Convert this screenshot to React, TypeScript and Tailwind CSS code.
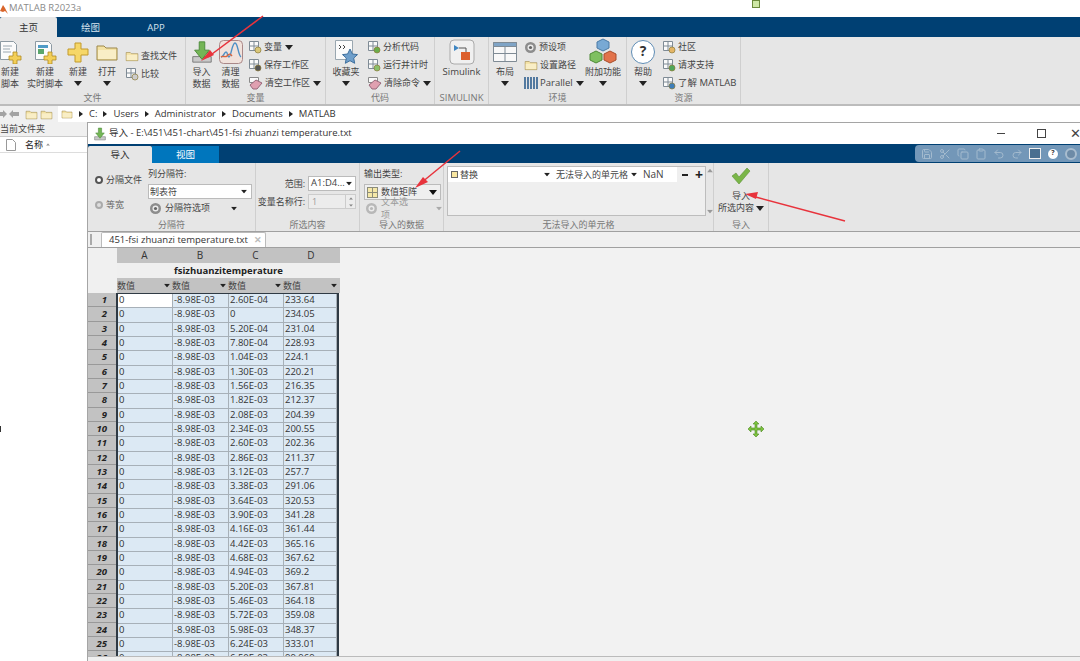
import { Clipboard, Copy, Redo2, Save, Scissors, Undo2 } from "lucide-react";

const font = "font-['Open_Sans','Noto_Sans_CJK_SC',sans-serif]";

const Caret = ({ className = "" }: { className?: string }) => (
  <svg width="8" height="5" viewBox="0 0 8 5" className={`shrink-0 ${className}`}>
    <path d="M0 0h8L4 5z" fill="currentColor" />
  </svg>
);

const Doc = ({ live = false }: { live?: boolean }) => (
  <svg width="24" height="24" viewBox="0 0 24 24">
    <path d="M2.5 1.5h13l3 3v15h-16z" fill="#fbfbfb" stroke="#8d9aa3" />
    {live ? (
      <g>
        <path d="M5 5h10v3H5z" fill="#4f9bc7" />
        <path d="M5 9h6v5H5z" fill="#5aa66b" />
      </g>
    ) : (
      <path d="M5 6h9M5 9h7M5 12h8" stroke="#9aa7b0" />
    )}
    <path d="M15 12h4v4h4v4h-4v4h-4v-4h-4v-4h4z" fill="#f3cf58" stroke="#b08a22" strokeWidth=".8" />
  </svg>
);

const PlusIcon = () => (
  <svg width="24" height="24" viewBox="0 0 24 24">
    <path d="M9 3h6v6h7v6h-7v7H9v-7H2V9h7z" fill="#f6d768" stroke="#c29a2c" />
  </svg>
);

const FolderIcon = ({ size = 24 }: { size?: number }) => (
  <svg width={size} height={size} viewBox="0 0 24 24" className="shrink-0">
    <path d="M2 6h7l2 2h11v12H2z" fill="#f4e2a4" stroke="#9c8748" />
    <path d="M3 10h18v9H3z" fill="#f9eec6" />
  </svg>
);

const ImportIcon = ({ size = 24 }: { size?: number }) => (
  <svg width={size} height={size} viewBox="0 0 26 26" className="shrink-0">
    <path d="M3 18h20v6H3z" fill="#c9c9c9" stroke="#777" />
    <path d="M10 2h6v9h5l-8 10-8-10h5z" fill="#74b556" stroke="#4b8a38" />
  </svg>
);

const CleanIcon = () => (
  <svg width="26" height="26" viewBox="0 0 26 26">
    <rect x="1.5" y="1.5" width="23" height="23" rx="4" fill="#f1e2dc" stroke="#a88" />
    <path d="M3 18c3 0 3-5 5-5s1 5 3 5 3-14 6-14 3 12 6 14" fill="none" stroke="#4c90c6" strokeWidth="1.4" />
    <path d="M3 18c2-2 4 1 6-1s3-3 5 0" fill="none" stroke="#d8653f" strokeWidth="1.4" />
  </svg>
);

const Star = () => (
  <svg width="26" height="26" viewBox="0 0 26 26">
    <path d="M2.5 1.5h17v19h-17z" fill="#fbfbfb" stroke="#9aa7b0" />
    <path d="M6 6l2 2-2 2M10 6l2 2-2 2" fill="none" stroke="#444" />
    <path d="M17 10l2.4 5 5.1.6-3.8 3.5 1 5.2-4.7-2.6-4.7 2.6 1-5.2-3.8-3.5 5.1-.6z" fill="#6f9fcb" stroke="#3f709e" />
  </svg>
);

const SimulinkIcon = () => (
  <svg width="26" height="26" viewBox="0 0 26 26">
    <rect x="1" y="1" width="24" height="24" rx="4" fill="#f0f0f0" stroke="#aaa" />
    <path d="M5 6l5 3-5 3z" fill="#3f86c2" />
    <path d="M10 9h7v4" fill="none" stroke="#555" />
    <path d="M12 13h9v8h-9z" fill="#dc5f2c" />
  </svg>
);

const LayoutIcon = () => (
  <svg width="26" height="26" viewBox="0 0 26 26">
    <path d="M1.5 3.5h23v19h-23z" fill="#f8f8f8" stroke="#7f8b95" />
    <path d="M1.5 3.5h23v4h-23z" fill="#7fa4c6" stroke="#7f8b95" />
    <path d="M13 7.5v15M1.5 14.5h23" stroke="#7f8b95" />
  </svg>
);

const AddonIcon = () => (
  <svg width="30" height="28" viewBox="0 0 30 28">
    <path d="M15 1l6 3v6l-6 3-6-3V4z" fill="#78a9d4" stroke="#4a7ba6" />
    <path d="M8 13l6 3v6l-6 3-6-3v-6z" fill="#7fc060" stroke="#4e8a36" />
    <path d="M22 13l6 3v6l-6 3-6-3v-6z" fill="#e2734b" stroke="#a94e2c" />
  </svg>
);

const HelpIcon = ({ size = 24 }: { size?: number }) => (
  <div
    className="flex items-center justify-center rounded-full border border-[#5f8db5] bg-white font-bold text-[#333]"
    style={{ width: size, height: size, fontSize: size * 0.58 }}
  >
    ?
  </div>
);

const Small = ({ color = "#d9c77a" }: { color?: string }) => (
  <svg width="14" height="14" viewBox="0 0 14 14" className="shrink-0">
    <path d="M1.5 1.5h9v9h-9z" fill="#fafafa" stroke="#7f8b95" />
    <path d="M1.5 6h9M6 1.5v9" stroke="#7f8b95" />
    <circle cx="10" cy="10" r="3" fill={color} stroke="#8b7a38" strokeWidth=".7" />
  </svg>
);

const Eraser = () => (
  <svg width="15" height="14" viewBox="0 0 15 14" className="shrink-0">
    <path d="M1.5 1.5h9v5h-9z" fill="#fafafa" stroke="#8a8a8a" />
    <path d="M2 9l6-5 6 3-5 6H5z" fill="#e0a0b0" stroke="#98687a" />
  </svg>
);

const Gear = ({ dim = false }: { dim?: boolean }) => (
  <svg width="13" height="13" viewBox="0 0 13 13" className="shrink-0">
    <circle cx="6.5" cy="6.5" r="5.5" fill={dim ? "#b8b8b8" : "#8d8d8d"} />
    <circle cx="6.5" cy="6.5" r="3" fill="#ececec" />
    <circle cx="6.5" cy="6.5" r="1.6" fill={dim ? "#b8b8b8" : "#666"} />
  </svg>
);

const BigButton = ({
  w,
  icon,
  lines,
  caret = false,
  size = "text-[9px]",
}: {
  w: number;
  icon: React.ReactNode;
  lines: string[];
  caret?: boolean;
  size?: string;
}) => (
  <div className="flex shrink-0 flex-col items-center" style={{ width: w }}>
    <div className="flex h-[29px] items-center justify-center">{icon}</div>
    {lines.map((l) => (
      <div key={l} className={`h-[12px] leading-[12px] whitespace-nowrap ${size}`}>
        {l}
      </div>
    ))}
    {caret && <Caret className="mt-[3px] text-[#222]" />}
  </div>
);

const SmallRow = ({
  icon,
  text,
  caret = false,
  size = "text-[9px]",
}: {
  icon: React.ReactNode;
  text: string;
  caret?: boolean;
  size?: string;
}) => (
  <div className={`flex h-[18px] items-center gap-[2px] whitespace-nowrap ${size}`}>
    {icon}
    <span>{text}</span>
    {caret && <Caret className="ml-[1px] text-[#222]" />}
  </div>
);

const Group = ({
  w,
  label,
  children,
  className = "",
  body = "h-[56px]",
  labelSize = "text-[9px]",
}: {
  w: number;
  label: string;
  children: React.ReactNode;
  className?: string;
  body?: string;
  labelSize?: string;
}) => (
  <div className="flex h-full shrink-0 flex-col border-r border-[#cfcfcf]" style={{ width: w }}>
    <div className={`flex overflow-hidden ${body} ${className}`}>{children}</div>
    <div className={`h-[12px] text-center leading-[12px] whitespace-nowrap text-[#777] ${labelSize}`}>{label}</div>
  </div>
);

const Crumb = ({ text }: { text: string }) => (
  <>
    <svg width="4" height="6" viewBox="0 0 4 6" className="mx-[6px] shrink-0">
      <path d="M0 0l4 3-4 3z" fill="#222" />
    </svg>
    <span>{text}</span>
  </>
);

const NavArrow = ({ flip = false }: { flip?: boolean }) => (
  <svg width="10" height="8" viewBox="0 0 10 8" className={`shrink-0 ${flip ? "rotate-180" : ""}`}>
    <path d="M0 4l4-4v2h6v4H4v2z" fill="#a3a3a3" />
  </svg>
);

const cRows = [
  "2.60E-04", "0", "5.20E-04", "7.80E-04", "1.04E-03", "1.30E-03", "1.56E-03", "1.82E-03", "2.08E-03",
  "2.34E-03", "2.60E-03", "2.86E-03", "3.12E-03", "3.38E-03", "3.64E-03", "3.90E-03", "4.16E-03",
  "4.42E-03", "4.68E-03", "4.94E-03", "5.20E-03", "5.46E-03", "5.72E-03", "5.98E-03", "6.24E-03", "6.50E-03",
];
const dRows = [
  "233.64", "234.05", "231.04", "228.93", "224.1", "220.21", "216.35", "212.37", "204.39", "200.55", "202.36",
  "211.37", "257.7", "291.06", "320.53", "341.28", "361.44", "365.16", "367.62", "369.2", "367.81", "364.18",
  "359.08", "348.37", "333.01", "99.969",
];

const colW = ["w-[55px]", "w-[56px]", "w-[55px]", "w-[56px]"];

const TypeCell = ({ w }: { w: string }) => (
  <div className={`flex h-[15px] items-center justify-between pr-[1px] text-[9px] text-[#444] ${w}`}>
    <span>数值</span>
    <Caret className="scale-75 text-[#222]" />
  </div>
);

const Cell = ({ w, text, active = false }: { w: string; text: string; active?: boolean }) => (
  <div className={`h-full border-r border-b border-[#a7b0b8] pl-[1px] text-[9.5px] leading-[12px] text-[#333] ${w} ${active ? "bg-white" : ""}`}>
    {text}
  </div>
);

const Table = () => (
  <div className="flex h-full w-[252px] flex-col overflow-hidden">
    <div className="flex">
      <div className="h-[45px] w-[29px] shrink-0 bg-[#f0f0f0]" />
      <div className="flex-1">
        <div className="flex h-[15px] bg-[#c2c2c2] text-[10px] leading-[15px] text-[#333]">
          {["A", "B", "C", "D"].map((c, i) => (
            <div key={c} className={`text-center ${colW[i]}`}>
              {c}
            </div>
          ))}
        </div>
        <div className="h-[15px] bg-[#efefef] text-center text-[9.5px] leading-[15px] font-bold text-[#222]">fsizhuanzitemperature</div>
        <div className="flex h-[15px] bg-[#c2c2c2]">
          {colW.map((w, i) => (
            <TypeCell key={i} w={w} />
          ))}
        </div>
      </div>
    </div>
    <div className="flex">
      <div className="w-[29px] shrink-0">
        {cRows.map((_, i) => (
          <div key={i} className="h-[14.33px] border-b border-[#999] bg-[#c2c2c2] pr-[10px] text-right text-[9.5px] leading-[13px] font-bold text-[#222] italic">
            {i + 1}
          </div>
        ))}
      </div>
      <div className="border-x-2 border-t border-[#2f3a44] bg-[#dce9f4] -ml-[1px]">
        {cRows.map((c, i) => (
          <div key={i} className="flex h-[14.33px] w-[219px]">
            <Cell w={colW[0]} text="0" active={i === 0} />
            <Cell w={colW[1]} text="-8.98E-03" />
            <Cell w={colW[2]} text={c} />
            <Cell w="w-[53px]" text={dRows[i]} />
          </div>
        ))}
      </div>
    </div>
  </div>
);

const QuickBar = () => (
  <div className="flex h-[17px] w-[165px] items-center justify-end gap-[6px] rounded-l-[4px] bg-[#7397b8] pr-[3px] text-[#a3bace]">
    <Save size={12} />
    <Scissors size={12} />
    <Copy size={12} />
    <Clipboard size={12} />
    <Undo2 size={12} />
    <Redo2 size={12} />
    <div className="h-[11px] w-[12px] border border-[#eee] bg-[#4a6f90]" />
    <HelpIcon size={12} />
    <div className="h-[12px] w-[12px] rounded-full border-2 border-[#a9bdcf] bg-[#6d8ba7]" />
  </div>
);

const ImportWindow = () => (
  <div className="absolute top-[122px] left-[87px] flex h-[539px] w-[993px] flex-col border-t border-l border-[#a5a5a5] bg-white">
    <div className="flex h-[21px] items-center pl-[5px] text-[9.5px] text-[#333]">
      <ImportIcon size={14} />
      <span className="ml-[2px]">导入 - E:\451\451-chart\451-fsi zhuanzi temperature.txt</span>
      <div className="ml-auto flex items-center">
        <div className="h-[1px] w-[8px] bg-[#444]" />
        <div className="ml-[32px] h-[9px] w-[9px] border border-[#444]" />
        <span className="ml-[24px] w-[10px] text-[13px] leading-none font-light text-[#444]">✕</span>
      </div>
    </div>
    <div className="flex h-[19px] justify-between bg-[#004073]">
      <div className="flex text-[9.5px]">
        <div className="mt-[2px] w-[64px] rounded-t-[2px] bg-[#e6e6e6] text-center leading-[17px] text-[#333]">导入</div>
        <div className="mt-[2px] w-[67px] bg-[#0076bd] text-center leading-[17px] text-white">视图</div>
      </div>
      <div className="mt-[1px]">
        <QuickBar />
      </div>
    </div>
    <div className="flex h-[68px] bg-[#e6e6e6] text-[#444]">
      <Group w={168} label="分隔符" className="pt-[3px] pl-[7px]">
        <div className="flex w-[53px] flex-col pt-[7px] text-[9px]">
          <div className="flex h-[14px] items-center gap-[3px] whitespace-nowrap">
            <span className="h-[8px] w-[8px] rounded-full border-2 border-[#555] bg-white" />
            分隔文件
          </div>
          <div className="mt-[11px] flex h-[14px] items-center gap-[3px] text-[#666]">
            <span className="h-[8px] w-[8px] rounded-full border-2 border-[#aaa] bg-[#ddd]" />
            等宽
          </div>
        </div>
        <div className="flex w-[104px] flex-col text-[9px]">
          <div className="h-[16px] leading-[16px]">列分隔符:</div>
          <div className="mt-[2px] flex h-[15px] items-center justify-between border border-[#bbb] bg-white pr-[3px] pl-[1px]">
            制表符
            <Caret className="scale-75 text-[#222]" />
          </div>
          <div className="mt-[1px] flex h-[16px] items-center gap-[3px] pl-[1px]">
            <Gear />
            分隔符选项
            <Caret className="ml-[17px] scale-75 text-[#222]" />
          </div>
        </div>
      </Group>
      <Group w={104} label="所选内容" className="flex-col items-end pt-[13px] pr-[3px]">
        <div className="flex h-[15px] items-center gap-[3px] text-[9px]">
          范围:
          <div className="flex h-[15px] w-[48px] items-center justify-between border border-[#bbb] bg-white pr-[2px] pl-[2px] text-[9.5px]">
            A1:D4...
            <Caret className="scale-75 text-[#222]" />
          </div>
        </div>
        <div className="mt-[3px] flex h-[15px] items-center gap-[3px] text-[9px] whitespace-nowrap">
          变量名称行:
          <div className="flex h-[15px] w-[48px] items-center justify-between border border-[#ccc] bg-[#ececec] pl-[3px] text-[#999]">
            1
            <div className="flex h-full w-[10px] flex-col items-center justify-center gap-[2px] border-l border-[#ccc]">
              <Caret className="scale-50 rotate-180 text-[#888]" />
              <Caret className="scale-50 text-[#888]" />
            </div>
          </div>
        </div>
      </Group>
      <Group w={84} label="导入的数据" className="flex-col pt-[3px] pl-[4px]">
        <div className="h-[16px] text-[9px] leading-[16px]">输出类型:</div>
        <div className="mt-[2px] flex h-[16px] w-[77px] items-center justify-between border border-[#bbb] bg-[#efefef] pr-[3px] pl-[2px] text-[9px]">
          <span className="flex items-center gap-[3px]">
            <span className="grid h-[11px] w-[11px] grid-cols-2 gap-[1px] bg-[#8c8c7a] p-[1px]">
              <i className="bg-[#f5e8a8]" />
              <i className="bg-[#f5e8a8]" />
              <i className="bg-[#f5e8a8]" />
              <i className="bg-[#f5e8a8]" />
            </span>
            数值矩阵
          </span>
          <Caret className="text-[#111]" />
        </div>
        <div className="flex h-[16px] items-center gap-[3px] pl-[1px] text-[9px] text-[#999]">
          <Gear dim />
          文本选项
          <Caret className="ml-[17px] scale-75 text-[#aaa]" />
        </div>
      </Group>
      <Group w={270} label="无法导入的单元格" className="pt-[3px] pl-[3px]">
        <div className="flex h-[50px] w-[259px] flex-col border border-[#bdbdbd] bg-[#efefef]">
          <div className="flex h-[15px] items-center text-[9px]">
            <div className="flex h-full w-[107px] items-center justify-between bg-white pr-[4px] pl-[3px]">
              <span className="flex items-center gap-[2px]">
                <span className="h-[7px] w-[7px] border border-[#666] bg-[#f8e6a0]" />
                替换
              </span>
              <Caret className="scale-75 text-[#222]" />
            </div>
            <div className="flex h-full w-[87px] items-center justify-between bg-white pr-[4px] pl-[1px] whitespace-nowrap">
              无法导入的单元格
              <Caret className="scale-75 text-[#222]" />
            </div>
            <div className="h-full w-[35px] bg-white pl-[1px] text-[10px] leading-[15px]">NaN</div>
            <div className="ml-[5px] h-[2px] w-[6px] bg-[#222]" />
            <span className="ml-[7px] text-[14px] leading-none font-bold text-[#222]">+</span>
          </div>
        </div>
        <div className="ml-[1px] flex h-[50px] w-[6px] flex-col items-center justify-between py-[2px]">
          <Caret className="scale-75 rotate-180 text-[#999]" />
          <Caret className="scale-75 text-[#999]" />
        </div>
      </Group>
      <Group w={55} label="导入" className="flex-col items-center">
        <svg width="20" height="18" viewBox="0 0 20 18" className="mt-[4px] shrink-0">
          <path d="M1 9l4-3 3 4 8-9 3 3-11 13z" fill="#7ab648" stroke="#5d9136" strokeWidth=".6" />
        </svg>
        <div className="mt-[5px] h-[12px] text-[9px] leading-[12px]">导入</div>
        <div className="flex h-[12px] items-center gap-[2px] text-[9px] leading-[12px] whitespace-nowrap">
          所选内容
          <Caret className="text-[#222]" />
        </div>
      </Group>
    </div>
    <div className="flex h-[17px] items-end border-y border-[#a0a0a0] bg-[#f0f0f0] pl-[2px]">
      <div className="mr-[9px] mb-[2px] h-[11px] w-[1px] border-x border-[#aaa]" />
      <div className="flex h-[15px] w-[165px] items-center justify-between rounded-t-[2px] border-x border-t border-[#bbb] bg-white pr-[3px] pl-[7px] text-[9.5px] whitespace-nowrap text-[#333]">
        451-fsi zhuanzi temperature.txt
        <span className="text-[9px] font-bold text-[#bbb]">✕</span>
      </div>
    </div>
    <div className="min-h-0 flex-1 bg-[#f2f2f2]">
      <Table />
    </div>
    <div className="h-[5px] border-t border-[#bbb] bg-[#f0f0f0]" />
  </div>
);

export default function App() {
  return (
    <div className={`relative h-[661px] w-[1080px] overflow-hidden bg-white text-[#444] ${font}`}>
      <div className="flex h-[17px] items-center text-[9.5px] text-[#8a8a8a]">
        <svg width="8" height="10" viewBox="0 0 8 10" className="shrink-0">
          <path d="M0 7l3-6 2 3 3 6-3-3-2 1z" fill="#d9652b" />
        </svg>
        <span className="ml-[1px]">MATLAB R2023a</span>
      </div>
      <div className="flex h-[20px] bg-[#004073] text-[9.5px]">
        <div className="w-[57px] rounded-t-[2px] bg-[#e6e6e6] pt-[2px] text-center leading-[18px] text-[#333]">主页</div>
        <div className="w-[67px] pt-[2px] text-center leading-[18px] text-[#d7e4ee]">绘图</div>
        <div className="w-[64px] pt-[2px] text-center leading-[18px] text-[#d7e4ee]">APP</div>
      </div>
      <div className="flex h-[69px] border-b-2 border-[#bcbcbc] bg-[#e6e6e6]">
        <Group w={186} label="文件" body="h-[57px]">
          <div className="-ml-[7px] flex">
            <BigButton w={34} icon={<Doc />} lines={["新建", "脚本"]} />
            <BigButton w={36} icon={<Doc live />} lines={["新建", "实时脚本"]} />
            <BigButton w={30} icon={<PlusIcon />} lines={["新建"]} caret />
            <BigButton w={28} icon={<FolderIcon />} lines={["打开"]} caret />
            <div className="flex flex-col pt-[10px] pl-[4px]">
              <SmallRow icon={<FolderIcon size={14} />} text="查找文件" />
              <SmallRow icon={<Small color="#ccc" />} text="比较" />
            </div>
          </div>
        </Group>
        <Group w={140} label="变量" body="h-[57px]" className="pl-[1px]">
          <BigButton w={29} icon={<ImportIcon />} lines={["导入", "数据"]} />
          <BigButton w={29} icon={<CleanIcon />} lines={["清理", "数据"]} />
          <div className="flex flex-col pt-[1px] pl-[3px]">
            <SmallRow icon={<Small />} text="变量" caret />
            <SmallRow icon={<Small color="#555" />} text="保存工作区" />
            <SmallRow icon={<Eraser />} text="清空工作区" caret />
          </div>
        </Group>
        <Group w={109} label="代码" body="h-[57px]" className="pl-[2px]">
          <BigButton w={36} icon={<Star />} lines={["收藏夹"]} caret />
          <div className="flex flex-col pt-[1px] pl-[3px]">
            <SmallRow icon={<Small color="#6bad4a" />} text="分析代码" />
            <SmallRow icon={<Small color="#8bbf6a" />} text="运行并计时" />
            <SmallRow icon={<Eraser />} text="清除命令" caret />
          </div>
        </Group>
        <Group w={54} label="SIMULINK" body="h-[57px]" labelSize="text-[9.5px]" className="justify-center">
          <BigButton w={50} icon={<SimulinkIcon />} lines={["Simulink"]} size="text-[9.5px]" />
        </Group>
        <Group w={138} label="环境" body="h-[57px]" className="pl-[2px]">
          <BigButton w={28} icon={<LayoutIcon />} lines={["布局"]} caret />
          <div className="flex w-[64px] flex-col pt-[1px] pl-[5px]">
            <SmallRow icon={<Gear />} text="预设项" />
            <SmallRow icon={<FolderIcon size={14} />} text="设置路径" />
            <SmallRow
              icon={
                <svg width="14" height="12" viewBox="0 0 14 12" className="shrink-0">
                  <path d="M1 0v12M4 0v12M7 0v12M10 0v12M13 0v12" stroke="#2f5f8f" strokeWidth="1.6" />
                </svg>
              }
              text="Parallel"
              size="text-[9.5px]"
              caret
            />
          </div>
          <BigButton w={40} icon={<AddonIcon />} lines={["附加功能"]} caret />
        </Group>
        <Group w={114} label="资源" body="h-[57px]" className="pl-[3px]">
          <BigButton w={26} icon={<HelpIcon />} lines={["帮助"]} caret />
          <div className="flex flex-col pt-[1px] pl-[6px]">
            <SmallRow icon={<Small color="#e4b566" />} text="社区" />
            <SmallRow icon={<Small color="#4fa65a" />} text="请求支持" />
            <SmallRow icon={<Small color="#3f7fb8" />} text="了解 MATLAB" size="text-[9.5px]" />
          </div>
        </Group>
      </div>
      <div className="flex h-[16px] items-center bg-[#f0f0f0] text-[9.5px] text-[#333]">
        <div className="flex w-[58px] items-center gap-[2px]">
          <div className="-ml-[3px] flex gap-[2px]">
            <NavArrow flip />
            <NavArrow />
          </div>
          <div className="ml-[4px] flex gap-[2px]">
            <FolderIcon size={13} />
            <FolderIcon size={13} />
          </div>
        </div>
        <div className="flex h-full flex-1 items-center bg-white pl-[3px]">
          <FolderIcon size={12} />
          <Crumb text="C:" />
          <Crumb text="Users" />
          <Crumb text="Administrator" />
          <Crumb text="Documents" />
          <Crumb text="MATLAB" />
        </div>
      </div>
      <div className="w-[87px] text-[9px] text-[#444]">
        <div className="flex h-[15px] items-center border-b border-[#ccc] bg-[#f0f0f0] whitespace-nowrap">当前文件夹</div>
        <div className="flex h-[16px] items-center border-b border-[#ddd] pl-[6px]">
          <svg width="10" height="12" viewBox="0 0 10 12" className="shrink-0">
            <path d="M.5.5h6l3 3v8h-9z" fill="#fff" stroke="#999" />
          </svg>
          <span className="ml-[9px] text-[#222]">名称</span>
          <Caret className="ml-[1px] scale-50 rotate-180 text-[#999]" />
        </div>
      </div>
      <ImportWindow />
      <div className="absolute top-[426px] left-0 h-[6px] w-[1px] bg-[#333]" />
      <div className="absolute top-0 left-[752px] h-[8px] w-[8px] border border-[#6c8a3c] bg-[#cfe8a6]" />
      <svg width="18" height="18" viewBox="0 0 18 18" className="absolute top-[420px] left-[747px]">
        <path d="M9 1l3 3h-2v4h4V6l3 3-3 3v-2h-4v4h2l-3 3-3-3h2v-4H4v2L1 9l3-3v2h4V4H6z" fill="#7cc23f" stroke="#4f8a24" strokeWidth=".6" />
      </svg>
      <svg width="1080" height="661" viewBox="0 0 1080 661" className="pointer-events-none absolute top-0 left-0">
        <g stroke="#e8333c" strokeWidth="1.5" fill="#e8333c">
          <path d="M263 16L208 57" />
          <path d="M201 61l9-11 4 5z" stroke="none" />
          <path d="M460 151L421 183" />
          <path d="M415 188l8-11 5 5z" stroke="none" />
          <path d="M845 221L752 196" />
          <path d="M745 194l13-2-2 7z" stroke="none" />
        </g>
      </svg>
    </div>
  );
}
